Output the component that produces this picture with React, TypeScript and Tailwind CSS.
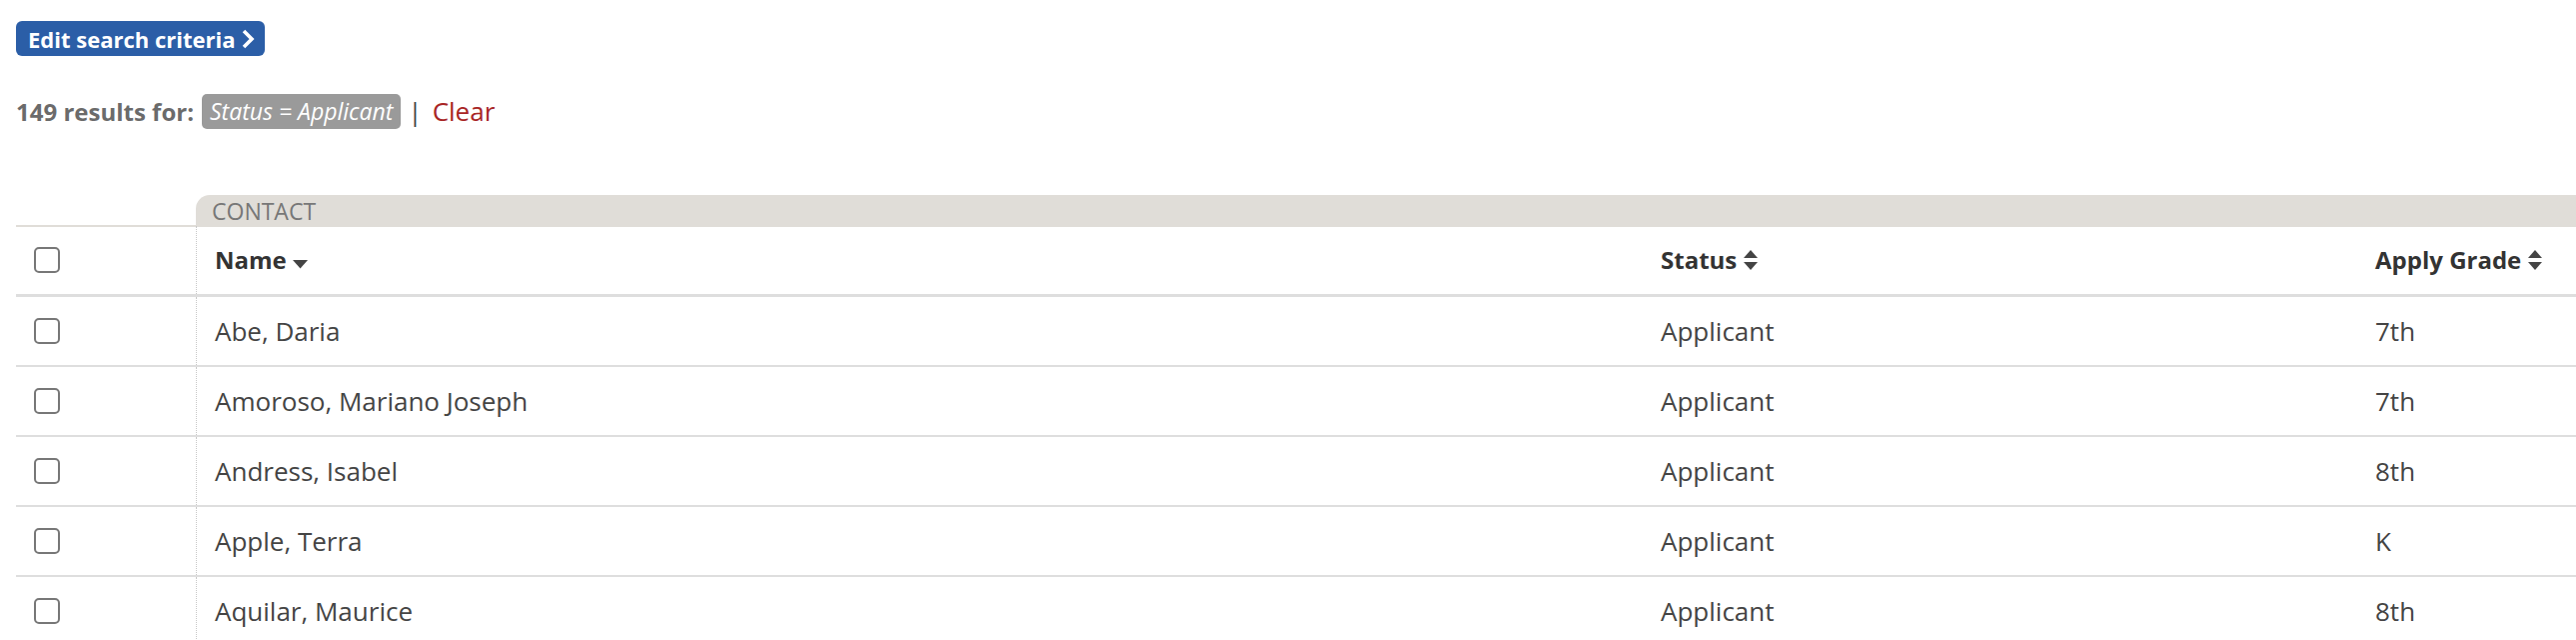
import React from 'react';

const rows = [
  { name: 'Abe, Daria', status: 'Applicant', grade: '7th' },
  { name: 'Amoroso, Mariano Joseph', status: 'Applicant', grade: '7th' },
  { name: 'Andress, Isabel', status: 'Applicant', grade: '8th' },
  { name: 'Apple, Terra', status: 'Applicant', grade: 'K' },
  { name: 'Aquilar, Maurice', status: 'Applicant', grade: '8th' },
];

const Checkbox = () => (
  <span className="block w-[26px] h-[26px] rounded-[5px] border-2 border-[#777] bg-white" />
);

const SortBoth = () => (
  <svg width="16" height="22" viewBox="0 0 16 22" className="ml-[6px] inline-block">
    <path d="M8 1 L15 9 H1 Z" fill="#444" />
    <path d="M1 13 H15 L8 21 Z" fill="#444" />
  </svg>
);

const SortDown = () => (
  <svg width="15" height="9" viewBox="0 0 15 9" className="ml-[6px] mt-[8px] inline-block">
    <path d="M0 0 H15 L7.5 8.5 Z" fill="#444" />
  </svg>
);

export default function App() {
  return (
    <div className="min-h-screen bg-white pl-4 font-['Open_Sans',sans-serif] text-[#444]">
      <div className="pt-[21px]">
        <button className="flex items-center gap-[6px] h-[35px] pl-[12px] pr-[10px] rounded-[6px] bg-[#2b5ea7] text-white font-bold text-[22px] leading-none">
          Edit search criteria
          <svg width="14" height="20" viewBox="0 0 14 20">
            <path d="M3 2 L11 10 L3 18" fill="none" stroke="white" strokeWidth="3.6" />
          </svg>
        </button>
      </div>

      <div className="flex items-center mt-[38px] h-[35px] text-[24px]">
        <span className="font-bold text-[#6b6b6b]">149 results for:</span>
        <span className="ml-[8px] h-[35px] flex items-center px-[8px] rounded-[5px] bg-[#9a9a9a] text-white italic text-[23px]">
          Status = Applicant
        </span>
        <span className="ml-[7px] text-[#444] text-[26px]">|</span>
        <span className="ml-[10px] text-[#a82525] text-[26px]">Clear</span>
      </div>

      <div className="mt-[66px] overflow-hidden">
        {/* group header */}
        <div className="grid grid-cols-[180px_1fr] h-[31px]">
          <div className="border-b-2 border-[#e0ddd8]" />
          <div className="bg-[#e0ddd8] rounded-tl-[14px] pl-[16px] flex items-end text-[23px] text-[#777] leading-[32px]">
            CONTACT
          </div>
        </div>

        {/* column header */}
        <div className="grid grid-cols-[180px_1450px_715px_1fr] h-[71px] border-b-[3px] border-[#dedede] font-bold text-[24px] text-[#333]">
          <div className="flex items-center pl-[18px]">
            <Checkbox />
          </div>
          <div className="flex items-center pl-[18px] border-l border-dotted border-[#c8c8c8]">
            Name
            <SortDown />
          </div>
          <div className="flex items-center pl-[16px]">
            Status
            <SortBoth />
          </div>
          <div className="flex items-center pl-[16px] whitespace-nowrap">
            Apply Grade
            <SortBoth />
          </div>
        </div>

        {rows.map((r) => (
          <div
            key={r.name}
            className="grid grid-cols-[180px_1450px_715px_1fr] h-[70px] border-b-2 border-[#dedede] text-[26px] text-[#444]"
          >
            <div className="flex items-center pl-[18px]">
              <Checkbox />
            </div>
            <div className="flex items-center pl-[18px] border-l border-dotted border-[#c8c8c8]">{r.name}</div>
            <div className="flex items-center pl-[16px]">{r.status}</div>
            <div className="flex items-center pl-[16px]">{r.grade}</div>
          </div>
        ))}
      </div>
    </div>
  );
}
